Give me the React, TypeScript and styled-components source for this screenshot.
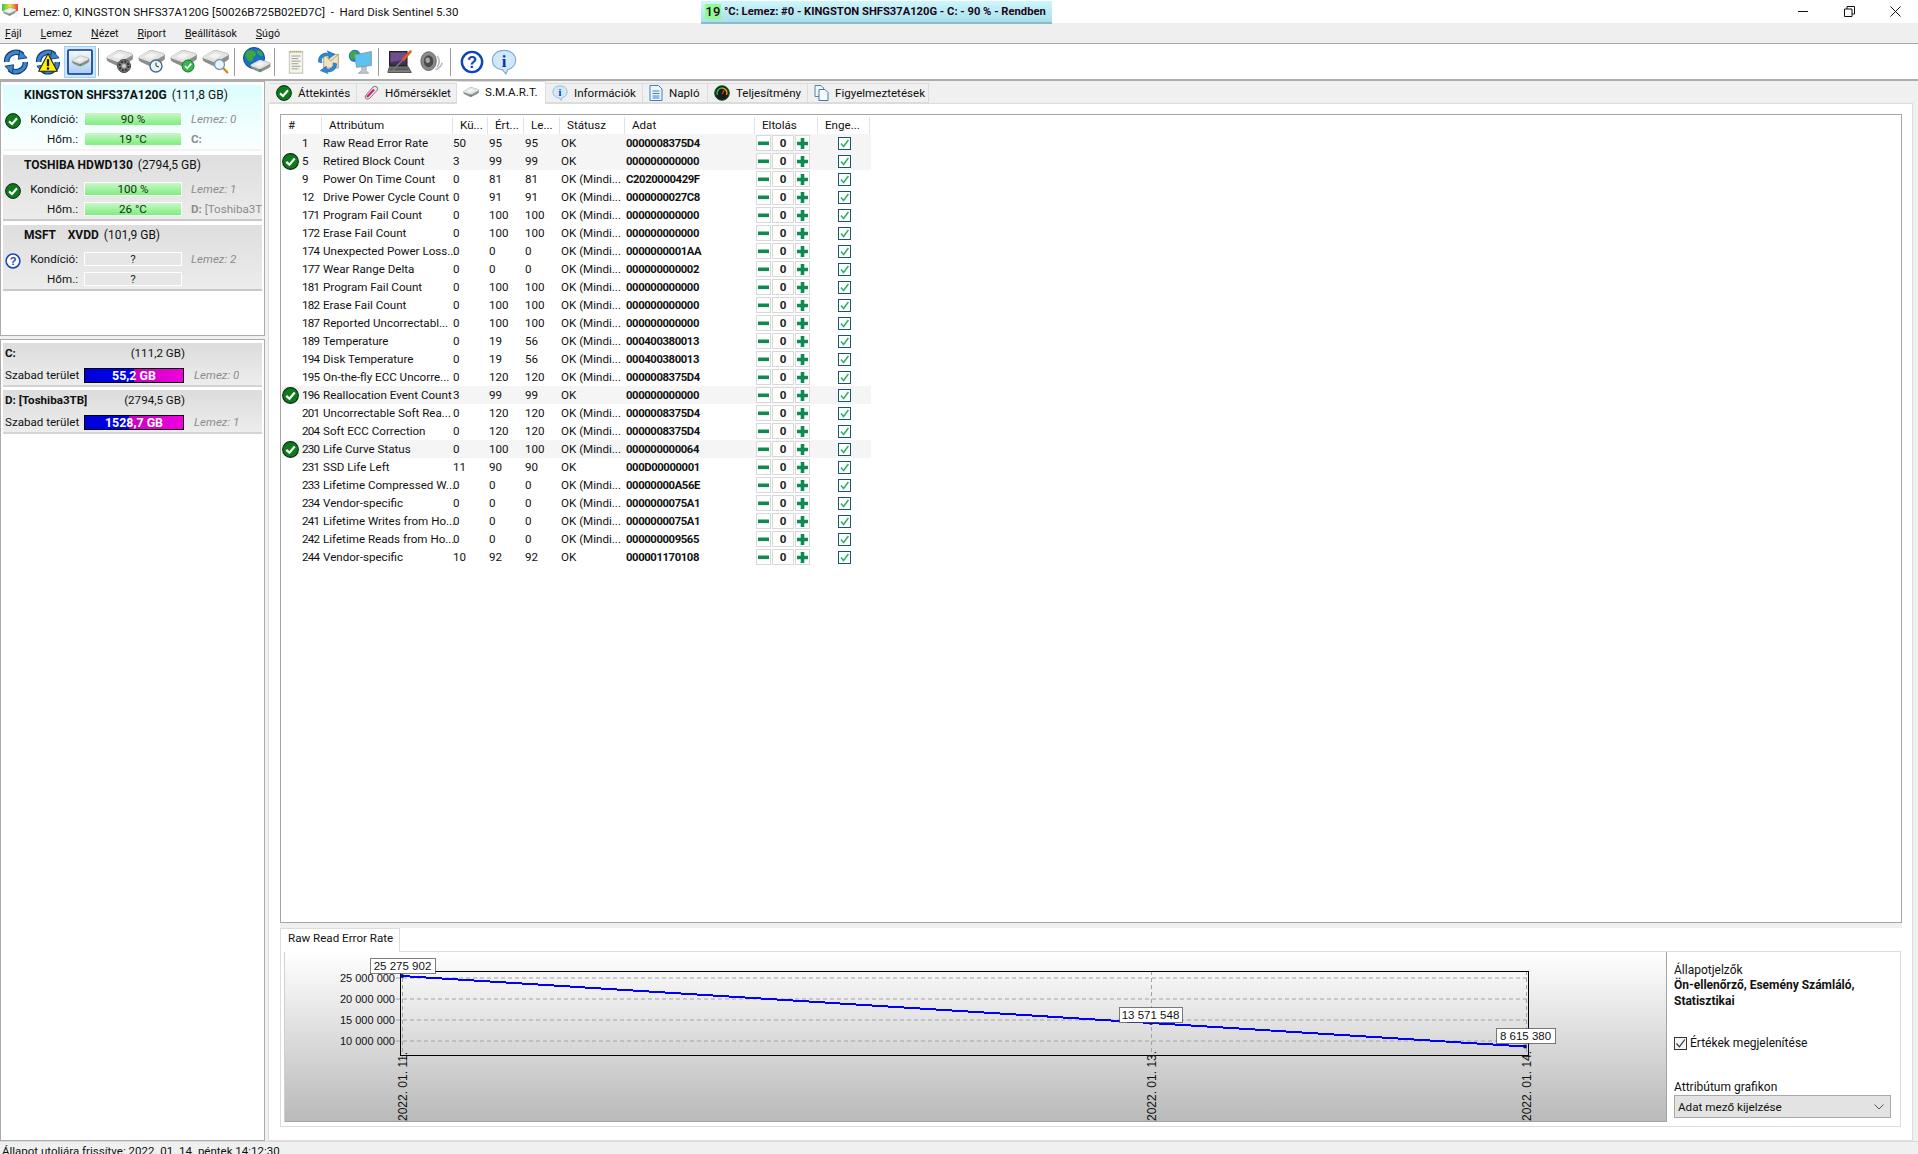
import React from "react";
import styled, { createGlobalStyle } from "styled-components";

const UI = `Roboto, "Noto Sans", "DejaVu Sans", sans-serif`;

const Global = createGlobalStyle`
  html, body { margin: 0; padding: 0; width: 1918px; height: 1154px; overflow: hidden; background: #f0f0f0; }
  body { font-family: ${UI}; font-size: 11.6px; color: #111; }
  * { box-sizing: border-box; }
`;

const Window = styled.div`
  width: 1918px; height: 1154px; display: flex; flex-direction: column; overflow: hidden;
`;
const TitleBar = styled.div`
  position: relative; height: 23px; flex: none; background: #fff; display: flex; align-items: center; padding-left: 2px; gap: 5px;
`;
const TitleText = styled.span` font-size: 11.5px; white-space: pre; color: #111; `;
const Banner = styled.div`
  position: absolute; left: 701px; top: 1px; width: 351px; height: 23px; z-index: 3;
  background: linear-gradient(#cdf7fc, #a9dfea); border-bottom: 2px solid #8bbcc6;
  display: flex; align-items: center; padding-left: 4px; gap: 3px;
  font-weight: 700; font-size: 11.2px; color: #1c0618; white-space: nowrap;
`;
const BannerTemp = styled.span`
  background: #8ffb8f; width: 16px; height: 15px; display: flex; align-items: center; justify-content: center; font-size: 13px; font-weight: 500;
`;
const WinButtons = styled.div`
  margin-left: auto; display: flex; align-items: center; height: 23px;
`;
const WinBtn = styled.span`
  width: 46px; height: 23px; display: flex; align-items: center; justify-content: center;
`;
const MenuBar = styled.div`
  height: 21px; flex: none; background: #efefef; border-bottom: 1px solid #a8a8a8; display: flex; align-items: center; padding-left: 5px; gap: 19px; font-size: 10.6px;
`;
const MenuItem = styled.span` &::first-letter { text-decoration: underline; } display: inline-block; `;
const Toolbar = styled.div`
  height: 35px; flex: none; background: #fff; display: flex; align-items: center;
`;
const ToolBtn = styled.span<{ $on?: boolean }>`
  width: 32px; height: 32px; display: flex; align-items: center; justify-content: center; flex: none;
  background: ${p => (p.$on ? "#cce8ff" : "transparent")}; border: 1px solid ${p => (p.$on ? "#99d1ff" : "transparent")};
`;
const ToolSep = styled.span`
  width: 8px; height: 28px; flex: none;
  &::before { content: ""; display: block; width: 1px; height: 100%; margin-left: 2px; background: #9c9c9c; }
`;
const Body = styled.div`
  flex: 1; min-height: 0; display: flex; background: #f0f0f0; border-top: 2px solid #acacac;
`;
const LeftCol = styled.div`
  width: 265px; flex: none; display: flex; flex-direction: column; gap: 3px;
`;
const DiskPanel = styled.div`
  height: 255px; flex: none; background: #fff; border: 1px solid #ababab; padding: 3px 2px; display: flex; flex-direction: column; gap: 4px;
`;
const VolPanel = styled.div`
  flex: 1; background: #fff; border: 1px solid #ababab; padding: 3px 2px; display: flex; flex-direction: column; gap: 3px;
`;
const DiskCard = styled.div<{ $active?: boolean }>`
  height: 66px; flex: none; overflow: hidden;
  background: ${p => (p.$active ? "linear-gradient(#dcfdfe, #fbffff)" : "linear-gradient(#dedede, #ececec)")};
  border-bottom: 2px solid ${p => (p.$active ? "#f4f4f4" : "#c8c8c8")};
`;
const CardTitle = styled.div`
  height: 20px; display: flex; align-items: center; padding: 0 0 1px 21px; gap: 5px; white-space: pre; font-size: 12px;
  b { font-weight: 700; }
`;
const CardGrid = styled.div`
  margin-top: 4px; display: grid; grid-template-columns: 20px 55px 99px 1fr; grid-auto-rows: 20px; align-items: center;
`;
const CardIcon = styled.span` display: flex; justify-content: center; padding-top: 3px; `;
const CardLabel = styled.span` text-align: right; `;
const Meter = styled.span<{ $empty?: boolean }>`
  margin-left: 6px; height: 14px; width: 98px; border: 1px solid #fff; display: flex; align-items: center; justify-content: center;
  color: #143014;
  background: ${p => (p.$empty ? "#e6e6e6" : "linear-gradient(#c9f7c9, #7eee7e)")};
`;
const Note = styled.span<{ $plain?: boolean }>`
  margin-left: 14px; white-space: nowrap; overflow: hidden; color: #8c8c8c;
  font-style: ${p => (p.$plain ? "normal" : "italic")};
  b { font-weight: 700; }
`;
const VolCard = styled.div`
  height: 44px; flex: none; background: linear-gradient(#dcdcdc, #ededed); border-bottom: 2px solid #d4d4d4; padding-left: 2px;
`;
const VolTitle = styled.div`
  height: 20px; width: 180px; display: flex; align-items: center; justify-content: space-between; b { font-weight: 700; }
`;
const VolRow = styled.div` display: flex; align-items: center; height: 22px; padding-top: 2px; `;
const VolLabel = styled.span` width: 79px; white-space: nowrap; `;
const VolBar = styled.span<{ $blue: number }>`
  width: 100px; height: 15px; border: 1px solid #000; display: flex; align-items: center; justify-content: center; color: #fff; font-weight: 700; font-size: 12.4px; margin-right: -4px;
  background: linear-gradient(90deg, #0000d8 0, #0000f0 ${p => p.$blue}%, #c800c0 ${p => p.$blue}%, #f000e0 100%);
`;
const RightCol = styled.div`
  flex: 1; min-width: 0; margin-left: 3px; margin-right: 5px; display: flex; flex-direction: column;
`;
const TabStrip = styled.div`
  height: 23px; flex: none; display: flex; align-items: flex-end; padding-left: 2px; position: relative; z-index: 1; margin-bottom: -1px;
`;
const Tab = styled.div<{ $w: number; $on?: boolean }>`
  width: ${p => p.$w}px; flex: none; display: flex; align-items: center; white-space: nowrap; gap: 6px; padding-left: 6px;
  height: ${p => (p.$on ? 23 : 20)}px; margin-bottom: ${p => (p.$on ? 0 : 1)}px;
  padding-bottom: ${p => (p.$on ? 3 : 0)}px;
  background: ${p => (p.$on ? "#fff" : "#f0f0f0")};
  border: 1px solid #dcdcdc; border-bottom: ${p => (p.$on ? "none" : "1px solid #dcdcdc")}; border-left: none;
`;
const Page = styled.div`
  flex: 1; min-height: 0; background: #fff; border: 1px solid #dcdcdc; padding: 10px 10px 13px 11px; display: flex; flex-direction: column;
`;
const ListBox = styled.div`
  flex: 1; min-height: 0; background: #fff; border: 1px solid #a5a5a5;
`;
const HeadRow = styled.div`
  display: grid; height: 19px; width: 590px; padding-top: 2px;
  grid-template-columns: 41px 131px 35px 36px 36px 65px 130px 63px 52px;
`;
const HeadCell = styled.span`
  height: 17px; line-height: 17px; padding-left: 7px; border-right: 1px solid #e2e2e2; white-space: nowrap; overflow: hidden;
`;
const Row = styled.div<{ $hl?: boolean }>`
  display: grid; height: 18px; width: 589px; margin-left: 1px; align-items: center;
  grid-template-columns: 20px 21px 130px 36px 36px 36px 65px 130px 62px 53px;
  background: ${p => (p.$hl ? "#f5f5f5" : "transparent")}; white-space: pre;
`;
const RowBadge = styled.span` display: flex; height: 17px; `;
const RowNum = styled.span` letter-spacing: -0.8px; `;
const RowData = styled.span` font-weight: 700; font-size: 11.3px; letter-spacing: -0.4px; `;
const Stepper = styled.span` display: flex; gap: 1px; height: 16px; `;
const StepBtn = styled.span`
  width: 15px; height: 16px; background: #fff; border: 1px solid #d8d8d8; display: flex; align-items: center; justify-content: center;
`;
const StepVal = styled(StepBtn)` width: 22px; font-weight: 700; color: #222; `;
const RowCheckWrap = styled.span` display: flex; justify-content: center; `;
const RowCheck = styled.span`
  width: 13px; height: 13px; border: 1px solid #15557a; background: #fff; display: flex; align-items: center; justify-content: center;
`;
const Splitter = styled.div` height: 5px; flex: none; background: #f0f0f0; `;
const BottomTabs = styled.div` height: 199px; flex: none; display: flex; flex-direction: column; `;
const BottomStrip = styled.div` height: 23px; flex: none; display: flex; `;
const BottomTab = styled.div`
  width: 120px; height: 24px; background: #fff; border: 1px solid #dcdcdc; border-bottom: none; display: flex; align-items: center; padding: 0 0 5px 7px; white-space: nowrap; position: relative; z-index: 1;
`;
const ChartPane = styled.div`
  flex: 1; min-height: 0; margin-right: 1px; border: 1px solid #dcdcdc; padding: 0 3px 4px 3px; display: flex;
`;
const ChartSvg = styled.svg` width: 1383px; height: 170px; flex: none; display: block; `;
const SidePanel = styled.div`
  flex: 1; padding: 10px 6px 0 7px; display: flex; flex-direction: column; font-size: 12px;
`;
const SideLine = styled.div` line-height: 16px; `;
const SideBold = styled.div` line-height: 15.5px; font-weight: 700; `;
const CheckRow = styled.div` margin-top: 26px; display: flex; align-items: center; gap: 3px; height: 16px; `;
const PlainCheck = styled.span`
  width: 13px; height: 13px; border: 1px solid #333; background: #f4f4f4; display: flex; align-items: center; justify-content: center;
`;
const SelectLabel = styled.div` margin-top: 28px; line-height: 16px; `;
const SelectBox = styled.div`
  height: 23px; background: #e3e3e3; border: 1px solid #a9a9a9; display: flex; align-items: center; justify-content: space-between; padding: 0 6px 0 3px; font-size: 11.7px;
`;
const StatusBar = styled.div`
  height: 13px; flex: none; background: #f0f0f0; border-top: 1px solid #dcdcdc; padding-left: 2px; line-height: 18px; font-size: 11.5px; overflow: hidden; white-space: nowrap;
`;

/* ---------- icons ---------- */
const Check = ({ s = 16 }: { s?: number }) => (
  <svg width={s} height={s} viewBox="0 0 16 16">
    <circle cx="8" cy="8" r="7.4" fill="#0d7a1c" stroke="#0b2a10" strokeWidth="1" />
    <path d="M4 8.4 L7 11 L12 5.2" fill="none" stroke="#fff" strokeWidth="2.1" />
  </svg>
);
const Help = ({ s = 16 }: { s?: number }) => (
  <svg width={s} height={s} viewBox="0 0 16 16">
    <circle cx="8" cy="8" r="6.9" fill="#fff" stroke="#1746b0" strokeWidth="1.5" />
    <text x="8" y="12" textAnchor="middle" fontSize="11" fontWeight="700" fontFamily="Liberation Sans" fill="#1746b0">?</text>
  </svg>
);
const Disk = ({ x = 0, y = 0, k = 1 }: { x?: number; y?: number; k?: number }) => (
  <g transform={`translate(${x} ${y}) scale(${k})`}>
    <path d="M1 8 L11 2 Q13 1 15 1.5 L25 4.5 Q27 5 26.5 7 L26.5 10 Q26 11 24 12 L15 16.5 Q13 17.2 11 16.5 L2.5 12.5 Q1 11.5 1 10Z" fill="#8d8f8d" stroke="#747674" strokeWidth=".5" />
    <path d="M1 7.6 L11 2 Q13 1 15 1.5 L25 4.5 Q27 5.4 25.5 6.8 L15 12.6 Q13 13.6 11 12.8 L2 9.4 Q.5 8.6 1 7.6Z" fill="#e2e4e2" />
    <path d="M6 7.5 L13 4 L20 6 L13 10Z" fill="#f2f3f2" />
    <rect x="12.3" y="13.6" width="2.2" height="3" fill="#1ea23c" />
  </g>
);
const Refresh = ({ warn }: { warn?: boolean }) => (
  <svg width="26" height="26" viewBox="0 0 28 28">
    {[0, 1].map(i => (
      <g key={i} transform={`rotate(${i * 180} 14 14)`}>
        <path d="M4 14 A10 10 0 0 1 21 6.5" fill="none" stroke="#0f3a78" strokeWidth="6" />
        <path d="M4 14 A10 10 0 0 1 21 6.5" fill="none" stroke="#3f86c9" strokeWidth="3.6" />
        <path d="M18 1.5 L26 9.5 L16.5 11Z" fill="#3f86c9" stroke="#0f3a78" strokeWidth="1" />
      </g>
    ))}
    {warn && (
      <g>
        <path d="M14 5 L24 24 L4 24Z" fill="#fff200" stroke="#222" strokeWidth="1.2" strokeLinejoin="round" />
        <rect x="12.8" y="11" width="2.4" height="7.5" fill="#111" />
        <rect x="12.8" y="19.8" width="2.4" height="2.4" fill="#111" />
      </g>
    )}
  </svg>
);
const Drive = () => (
  <svg width="26" height="26" viewBox="0 0 26 26">
    <defs><linearGradient id="drv" x1="0" y1="0" x2="0" y2="1"><stop offset="0" stopColor="#f6fbff" /><stop offset="1" stopColor="#a9cdf0" /></linearGradient></defs>
    <rect x="1" y="1" width="24" height="24" rx="1" fill="url(#drv)" stroke="#0c2f8a" strokeWidth="1.6" />
    <Disk x="4.5" y="6" k={0.66} />
  </svg>
);
const DiskTool = ({ kind }: { kind: "gear" | "clock" | "ok" | "find" }) => (
  <svg width="28" height="28" viewBox="0 0 28 28">
    <Disk y="1" />
    {kind === "gear" && (
      <g>
        <circle cx="18" cy="18" r="6.5" fill="#7c7c7c" stroke="#444" />
        <circle cx="18" cy="18" r="4.4" fill="none" stroke="#2e2e2e" strokeWidth="2" strokeDasharray="2 1.4" />
        <circle cx="18" cy="18" r="2" fill="#cfcfcf" />
      </g>
    )}
    {kind === "clock" && (
      <g>
        <circle cx="18" cy="18" r="6" fill="#eaf4fb" stroke="#4a6c86" strokeWidth="1.4" />
        <path d="M18 14.5 V18 L21 19" fill="none" stroke="#333" strokeWidth="1" />
      </g>
    )}
    {kind === "ok" && (
      <g>
        <circle cx="18" cy="18" r="6" fill="#39b54a" stroke="#17752a" />
        <path d="M15 18 L17.3 20.3 L21.3 15.6" fill="none" stroke="#fff" strokeWidth="1.7" />
      </g>
    )}
    {kind === "find" && (
      <g>
        <path d="M21 20 L26 25" stroke="#d88a1c" strokeWidth="2.4" />
        <circle cx="17.5" cy="16.5" r="5" fill="#e8f3fb" stroke="#7c97ac" strokeWidth="1.3" />
      </g>
    )}
  </svg>
);
const GlobeDisk = () => (
  <svg width="30" height="30" viewBox="0 0 30 30">
    <circle cx="13" cy="11" r="10.5" fill="#1c6fc8" stroke="#10467f" />
    <path d="M6 4 Q12 2 14 5 Q17 8 12 10 Q13 14 9 15 Q5 12 4 8Z M16 3 Q22 4 22 9 Q18 9 16 6Z" fill="#39a93a" />
    <Disk x="9" y="12" k={0.76} />
  </svg>
);
const NoteIcon = () => (
  <svg width="18" height="24" viewBox="0 0 24 28" preserveAspectRatio="none">
    <rect x="3" y="2" width="18" height="25" fill="#f4f4ea" stroke="#b2b2a6" />
    <path d="M4 2 h16" stroke="#b7b07a" strokeWidth="2.4" strokeDasharray="1.6 1" />
    {[7, 10, 13, 16, 19, 22].map(y => <path key={y} d={`M6 ${y}h${y % 2 ? 12 : 9}`} stroke="#8a8a8a" strokeWidth="1" />)}
  </svg>
);
const MailIcon = () => (
  <svg width="24" height="24" viewBox="0 0 28 28">
    <rect x="9" y="5" width="17" height="16" fill="#f0e4c0" stroke="#a6976c" />
    <path d="M9 5 L17.5 13 L26 5" fill="none" stroke="#a6976c" />
    <path d="M3 14 A9 9 0 0 1 15 4 L13 1 L22 5 L15 10 L15 7 A6 6 0 0 0 7 15Z" fill="#2f86dc" stroke="#135a9e" strokeWidth=".7" />
    <path d="M24 16 A9 9 0 0 1 12 25 L14 27.5 L5 24 L12 19 L12 22 A6 6 0 0 0 20 15Z" fill="#2f86dc" stroke="#135a9e" strokeWidth=".7" />
  </svg>
);
const MonitorIcon = () => (
  <svg width="26" height="26" viewBox="0 0 30 30">
    <circle cx="9" cy="8" r="7" fill="#1f78c9" />
    <path d="M4 4 Q8 1 11 3 Q13 7 9 9 Q8 13 5 12 Q2 8 4 4Z" fill="#3daa3a" />
    <path d="M9 7 L28 3 V19 L11 21Z" fill="#5cc2f0" stroke="#8a9bab" strokeWidth="1.2" />
    <path d="M17 21 V25 L13 28 H25 L22 25 V20Z" fill="#bfc7cf" stroke="#8a94a0" strokeWidth=".8" />
  </svg>
);
const LaptopIcon = () => (
  <svg width="26" height="26" viewBox="0 0 30 30">
    <rect x="3" y="3" width="20" height="16" fill="#4a2f66" stroke="#222" strokeWidth="1.4" />
    <path d="M4 4h18v8L4 15Z" fill="#6f4f8a" />
    <path d="M3 20 H24 L28 27 H1Z" fill="#8c8c8c" stroke="#333" />
    <path d="M4 22 H24 M3 24 H25" stroke="#222" strokeWidth=".8" />
    <path d="M6 25 L20 11" stroke="#7a7a7a" strokeWidth="1.6" />
    <path d="M19 12 L27 3" stroke="#e25a1c" strokeWidth="3.2" strokeLinecap="round" />
  </svg>
);
const SpeakerIcon = () => (
  <svg width="24" height="26" viewBox="0 0 28 28">
    <ellipse cx="10" cy="13" rx="9" ry="11" fill="#8a8a8a" stroke="#5e5e5e" />
    <ellipse cx="10" cy="13" rx="5.5" ry="7" fill="#4a4a4a" />
    <ellipse cx="9" cy="12" rx="2.5" ry="3.2" fill="#a8a8a8" />
    <path d="M20 7 Q25 13 20 20 M18 23 Q24 21 26 15" fill="none" stroke="#b5b9c6" strokeWidth="1.8" />
  </svg>
);
const BigHelp = () => (
  <svg width="24" height="24" viewBox="0 0 26 26">
    <circle cx="13" cy="13" r="11" fill="#fff" stroke="#0d45b5" strokeWidth="2.6" />
    <text x="13" y="19.5" textAnchor="middle" fontSize="18" fontWeight="700" fontFamily="Liberation Sans" fill="#0d45b5">?</text>
  </svg>
);
const InfoBubble = ({ s = 26 }: { s?: number }) => (
  <svg width={s} height={s} viewBox="0 0 28 28">
    <path d="M14 1.5 C22 1.5 26.5 6.5 26.5 12 C26.5 18 22 21.5 18 22 L16 27 L12.5 22.5 C6 22 1.5 18 1.5 12 C1.5 6.5 6 1.5 14 1.5Z" fill="#cfe8fb" stroke="#7fa9cf" strokeWidth="1.2" />
    <text x="14" y="19" textAnchor="middle" fontSize="18" fontWeight="700" fontFamily="Liberation Serif" fill="#0b2fa8">i</text>
  </svg>
);
const Thermo = () => (
  <svg width="16" height="16" viewBox="0 0 16 16">
    <path d="M3 10 L10 2 Q12 .5 14 2 Q15.3 4 14 5.5 L6.5 13.5 Q4 15 2.6 13.5 Q1.5 12 3 10Z" fill="#e8e8e8" stroke="#7a7a7a" />
    <path d="M4 12 L11 4.5" stroke="#d81d78" strokeWidth="2.2" />
  </svg>
);
const SmallDisk = () => (
  <svg width="16" height="12" viewBox="0 0 27 18"><Disk /></svg>
);
const DocIcon = () => (
  <svg width="14" height="16" viewBox="0 0 14 16">
    <path d="M1 .5 H9.5 L13 4 V15.5 H1Z" fill="#eef6fd" stroke="#3f7fc0" />
    {[6, 8.5, 11, 13].map(y => <path key={y} d={`M3.5 ${y}h7`} stroke="#3f7fc0" strokeWidth="1" />)}
  </svg>
);
const GaugeIcon = () => (
  <svg width="16" height="16" viewBox="0 0 16 16">
    <circle cx="8" cy="8" r="7.3" fill="#1b1b1b" stroke="#0c5a1a" />
    <path d="M3.4 10 A5 5 0 0 1 8 3" fill="none" stroke="#27c24a" strokeWidth="1.5" />
    <path d="M8 3 A5 5 0 0 1 12.6 10" fill="none" stroke="#d9a118" strokeWidth="1.5" />
    <path d="M8 9 L10.2 5" stroke="#ea3a20" strokeWidth="1.2" />
  </svg>
);
const CopyIcon = () => (
  <svg width="15" height="16" viewBox="0 0 15 16">
    <path d="M1 .5 H7 L9.5 3 V11.5 H1Z" fill="#eef5fc" stroke="#5c7ea0" />
    <path d="M5 4.5 H11 L14 7.5 V15.5 H5Z" fill="#f7fbff" stroke="#3f78b4" />
  </svg>
);
const AppIcon = () => (
  <svg width="16" height="15" viewBox="0 0 16 15">
    <defs><linearGradient id="ap" x1="0" y1="0" x2="1" y2="0"><stop offset="0" stopColor="#39c24a" /><stop offset=".5" stopColor="#efe23a" /><stop offset="1" stopColor="#e53c3c" /></linearGradient></defs>
    <rect x="0" y="0" width="16" height="7" fill="url(#ap)" />
    <g><Disk x="1" y="3" k={0.5} /></g>
    <rect x="13" y="8" width="2" height="6" fill="#f2f2f2" />
  </svg>
);
const MinusGlyph = () => <svg width="11" height="11" viewBox="0 0 11 11"><rect x="0" y="3.5" width="11" height="3.6" fill="#0e8a52" /></svg>;
const PlusGlyph = () => <svg width="11" height="11" viewBox="0 0 11 11"><path d="M0 3.7h3.7V0h3.6v3.7H11v3.6H7.3V11H3.7V7.3H0Z" fill="#0e8a52" /></svg>;
const Tick = () => <svg width="11" height="11" viewBox="0 0 11 11"><path d="M2 5.5 L4.6 8.5 L9.4 2" fill="none" stroke="#2fb35c" strokeWidth="1.6" /></svg>;

/* ---------- data ---------- */
type Attr = [string, string, string, string, string, string, string, number?];
// last field: 1 = shaded row, 2 = shaded row with a status badge
const rows: Attr[] = [
  ["1", "Raw Read Error Rate", "50", "95", "95", "OK", "0000008375D4", 1],
  ["5", "Retired Block Count", "3", "99", "99", "OK", "000000000000", 2],
  ["9", "Power On Time Count", "0", "81", "81", "OK (Mindi...", "C2020000429F"],
  ["12", "Drive Power Cycle Count", "0", "91", "91", "OK (Mindi...", "0000000027C8"],
  ["171", "Program Fail Count", "0", "100", "100", "OK (Mindi...", "000000000000"],
  ["172", "Erase Fail Count", "0", "100", "100", "OK (Mindi...", "000000000000"],
  ["174", "Unexpected Power Loss...", "0", "0", "0", "OK (Mindi...", "0000000001AA"],
  ["177", "Wear Range Delta", "0", "0", "0", "OK (Mindi...", "000000000002"],
  ["181", "Program Fail Count", "0", "100", "100", "OK (Mindi...", "000000000000"],
  ["182", "Erase Fail Count", "0", "100", "100", "OK (Mindi...", "000000000000"],
  ["187", "Reported Uncorrectabl...", "0", "100", "100", "OK (Mindi...", "000000000000"],
  ["189", "Temperature", "0", "19", "56", "OK (Mindi...", "000400380013"],
  ["194", "Disk Temperature", "0", "19", "56", "OK (Mindi...", "000400380013"],
  ["195", "On-the-fly ECC Uncorre...", "0", "120", "120", "OK (Mindi...", "0000008375D4"],
  ["196", "Reallocation Event Count", "3", "99", "99", "OK", "000000000000", 2],
  ["201", "Uncorrectable Soft Rea...", "0", "120", "120", "OK (Mindi...", "0000008375D4"],
  ["204", "Soft ECC Correction", "0", "120", "120", "OK (Mindi...", "0000008375D4"],
  ["230", "Life Curve Status", "0", "100", "100", "OK (Mindi...", "000000000064", 2],
  ["231", "SSD Life Left", "11", "90", "90", "OK", "000D00000001"],
  ["233", "Lifetime Compressed W...", "0", "0", "0", "OK (Mindi...", "00000000A56E"],
  ["234", "Vendor-specific", "0", "0", "0", "OK (Mindi...", "0000000075A1"],
  ["241", "Lifetime Writes from Ho...", "0", "0", "0", "OK (Mindi...", "0000000075A1"],
  ["242", "Lifetime Reads from Ho...", "0", "0", "0", "OK (Mindi...", "000000009565"],
  ["244", "Vendor-specific", "10", "92", "92", "OK", "000001170108"],
];
const headers = ["#", "Attribútum", "Kü...", "Ért...", "Le...", "Státusz", "Adat", "Eltolás", "Enge..."];
const tabs = [
  { t: "Áttekintés", w: 87, i: <Check s={16} /> },
  { t: "Hőmérséklet", w: 100, i: <Thermo /> },
  { t: "S.M.A.R.T.", w: 89, i: <SmallDisk />, on: true },
  { t: "Információk", w: 97, i: <InfoBubble s={16} /> },
  { t: "Napló", w: 65, i: <DocIcon /> },
  { t: "Teljesítmény", w: 100, i: <GaugeIcon /> },
  { t: "Figyelmeztetések", w: 121, i: <CopyIcon /> },
];
const disks = [
  { name: "KINGSTON SHFS37A120G", cap: "(111,8 GB)", h: "90 %", t: "19 °C", n: "Lemez: 0", v: "C:", active: true, icon: <Check /> },
  { name: "TOSHIBA HDWD130", cap: "(2794,5 GB)", h: "100 %", t: "26 °C", n: "Lemez: 1", v: "D:", v2: " [Toshiba3TB]", icon: <Check /> },
  { name: "MSFT    XVDD", cap: "(101,9 GB)", h: "?", t: "?", n: "Lemez: 2", v: "", empty: true, icon: <Help /> },
];

/* chart geometry, in the chart's own coordinates */
const linePts = "118,24 867,71 1241,94.5";
const grid = [
  { y: 26, l: "25 000 000" }, { y: 47, l: "20 000 000" }, { y: 68, l: "15 000 000" }, { y: 89, l: "10 000 000" },
];
const dates = [{ x: 118, l: "2022. 01. 11." }, { x: 867, l: "2022. 01. 13." }, { x: 1242, l: "2022. 01. 14." }];
const flags = [
  { x: 86, y: 6, w: 65, l: "25 275 902" }, { x: 835, y: 55, w: 63, l: "13 571 548" }, { x: 1212, y: 76, w: 59, l: "8 615 380" },
];

export default function App() {
  return (
    <Window>
      <Global />
      <TitleBar>
        <AppIcon />
        <TitleText>{"Lemez: 0, KINGSTON SHFS37A120G [50026B725B02ED7C]  -  Hard Disk Sentinel 5.30"}</TitleText>
        <Banner>
          <BannerTemp>19</BannerTemp>
          <span>°C: Lemez: #0 - KINGSTON SHFS37A120G - C: - 90 % - Rendben</span>
        </Banner>
        <WinButtons>
          <WinBtn><svg width="11" height="11" viewBox="0 0 11 11"><path d="M0 5.5h10" stroke="#111" /></svg></WinBtn>
          <WinBtn><svg width="11" height="11" viewBox="0 0 11 11"><path d="M.5 3h7.5v7.5H.5Z M3 3V.5h7.5V8H8" fill="none" stroke="#111" /></svg></WinBtn>
          <WinBtn><svg width="11" height="11" viewBox="0 0 11 11"><path d="M.5 .5l10 10M10.5 .5l-10 10" stroke="#111" /></svg></WinBtn>
        </WinButtons>
      </TitleBar>
      <MenuBar>
        {["Fájl", "Lemez", "Nézet", "Riport", "Beállítások", "Súgó"].map(m => <MenuItem key={m}>{m}</MenuItem>)}
      </MenuBar>
      <Toolbar>
        <ToolBtn><Refresh /></ToolBtn>
        <ToolBtn><Refresh warn /></ToolBtn>
        <ToolBtn $on><Drive /></ToolBtn>
        <ToolSep />
        <ToolBtn><DiskTool kind="gear" /></ToolBtn>
        <ToolBtn><DiskTool kind="clock" /></ToolBtn>
        <ToolBtn><DiskTool kind="ok" /></ToolBtn>
        <ToolBtn><DiskTool kind="find" /></ToolBtn>
        <ToolSep />
        <ToolBtn><GlobeDisk /></ToolBtn>
        <ToolSep />
        <ToolBtn><NoteIcon /></ToolBtn>
        <ToolBtn><MailIcon /></ToolBtn>
        <ToolBtn><MonitorIcon /></ToolBtn>
        <ToolSep />
        <ToolBtn><LaptopIcon /></ToolBtn>
        <ToolBtn><SpeakerIcon /></ToolBtn>
        <ToolSep />
        <ToolBtn><BigHelp /></ToolBtn>
        <ToolBtn><InfoBubble /></ToolBtn>
      </Toolbar>
      <Body>
        <LeftCol>
          <DiskPanel>
            {disks.map(d => (
              <DiskCard key={d.name} $active={d.active}>
                <CardTitle><b>{d.name}</b><span>{d.cap}</span></CardTitle>
                <CardGrid>
                  <CardIcon>{d.icon}</CardIcon>
                  <CardLabel>Kondíció:</CardLabel>
                  <Meter $empty={d.empty}>{d.h}</Meter>
                  <Note>{d.n}</Note>
                  <span />
                  <CardLabel>Hőm.:</CardLabel>
                  <Meter $empty={d.empty}>{d.t}</Meter>
                  <Note $plain><b>{d.v}</b>{d.v2}</Note>
                </CardGrid>
              </DiskCard>
            ))}
          </DiskPanel>
          <VolPanel>
            <VolCard>
              <VolTitle><b>C:</b><span>(111,2 GB)</span></VolTitle>
              <VolRow>
                <VolLabel>Szabad terület</VolLabel>
                <VolBar $blue={50}>55,2 GB</VolBar>
                <Note>Lemez: 0</Note>
              </VolRow>
            </VolCard>
            <VolCard>
              <VolTitle><b>D: [Toshiba3TB]</b><span>(2794,5 GB)</span></VolTitle>
              <VolRow>
                <VolLabel>Szabad terület</VolLabel>
                <VolBar $blue={45}>1528,7 GB</VolBar>
                <Note>Lemez: 1</Note>
              </VolRow>
            </VolCard>
          </VolPanel>
        </LeftCol>
        <RightCol>
          <TabStrip>
            {tabs.map(t => <Tab key={t.t} $w={t.w} $on={t.on}>{t.i}<span>{t.t}</span></Tab>)}
          </TabStrip>
          <Page>
            <ListBox>
              <HeadRow>{headers.map(h => <HeadCell key={h}>{h}</HeadCell>)}</HeadRow>
              {rows.map(r => (
                <Row key={r[0]} $hl={!!r[7]}>
                  <RowBadge>{r[7] === 2 ? <Check s={17} /> : null}</RowBadge>
                  <RowNum>{r[0]}</RowNum>
                  <span>{r[1]}</span>
                  <span>{r[2]}</span>
                  <span>{r[3]}</span>
                  <span>{r[4]}</span>
                  <span>{r[5]}</span>
                  <RowData>{r[6]}</RowData>
                  <Stepper>
                    <StepBtn><MinusGlyph /></StepBtn>
                    <StepVal>0</StepVal>
                    <StepBtn><PlusGlyph /></StepBtn>
                  </Stepper>
                  <RowCheckWrap><RowCheck><Tick /></RowCheck></RowCheckWrap>
                </Row>
              ))}
            </ListBox>
            <Splitter />
            <BottomTabs>
              <BottomStrip><BottomTab>Raw Read Error Rate</BottomTab></BottomStrip>
              <ChartPane>
                <ChartSvg viewBox="0 0 1383 170" fontFamily="Liberation Sans" fontSize="11">
                  <defs>
                    <linearGradient id="chartBg" x1="0" y1="0" x2="0" y2="1">
                      <stop offset="0" stopColor="#ffffff" />
                      <stop offset="1" stopColor="#b9b9b9" />
                    </linearGradient>
                  </defs>
                  <rect width="1383" height="170" fill="url(#chartBg)" />
                  <path d="M0 169.5H1382.5V0" fill="none" stroke="#a4a4a4" />
                  <path d="M.5 0V170" stroke="#cfcfcf" />
                  {grid.map(g => <path key={g.y} d={`M112 ${g.y}H1244`} stroke="#a3a3a3" strokeDasharray="4 3" />)}
                  {dates.map(d => <path key={d.x} d={`M${d.x + 0.5} 19V107`} stroke="#a3a3a3" strokeDasharray="4 3" />)}
                  <rect x="116.5" y="19.5" width="1128" height="84" fill="none" stroke="#000" />
                  <polyline points={linePts} fill="none" stroke="#0000ff" strokeWidth="2" shapeRendering="crispEdges" />
                  <circle cx="118" cy="24" r="2" fill="#001080" />
                  <circle cx="867" cy="71" r="2" fill="#001080" />
                  <circle cx="1241" cy="94.5" r="2" fill="#001080" />
                  {grid.map(g => <text key={g.l} x="111" y={g.y + 4} textAnchor="end" fill="#111">{g.l}</text>)}
                  {dates.map(d => <text key={d.l} transform={`translate(${d.x + 5} 169) rotate(-90)`} fill="#111" fontSize="12">{d.l}</text>)}
                  {flags.map(f => (
                    <g key={f.l}>
                      <rect x={f.x + 0.5} y={f.y + 0.5} width={f.w} height="15" fill="#fff" stroke="#000" strokeDasharray="1 1" />
                      <text x={f.x + f.w / 2} y={f.y + 12} textAnchor="middle" fill="#111" fontSize="11.5">{f.l}</text>
                    </g>
                  ))}
                </ChartSvg>
                <SidePanel>
                  <SideLine>Állapotjelzők</SideLine>
                  <SideBold>Ön-ellenőrző, Esemény Számláló,</SideBold>
                  <SideBold>Statisztikai</SideBold>
                  <CheckRow>
                    <PlainCheck><svg width="11" height="11" viewBox="0 0 11 11"><path d="M1.5 5.5 L4.4 8.8 L9.8 1.5" fill="none" stroke="#333" strokeWidth="1.2" /></svg></PlainCheck>
                    <span>Értékek megjelenítése</span>
                  </CheckRow>
                  <SelectLabel>Attribútum grafikon</SelectLabel>
                  <SelectBox>
                    <span>Adat mező kijelzése</span>
                    <svg width="10" height="6" viewBox="0 0 10 6"><path d="M.5 .5 L5 5 L9.5 .5" fill="none" stroke="#555" /></svg>
                  </SelectBox>
                </SidePanel>
              </ChartPane>
            </BottomTabs>
          </Page>
        </RightCol>
      </Body>
      <StatusBar>Állapot utoljára frissítve: 2022. 01. 14. péntek 14:12:30</StatusBar>
    </Window>
  );
}
